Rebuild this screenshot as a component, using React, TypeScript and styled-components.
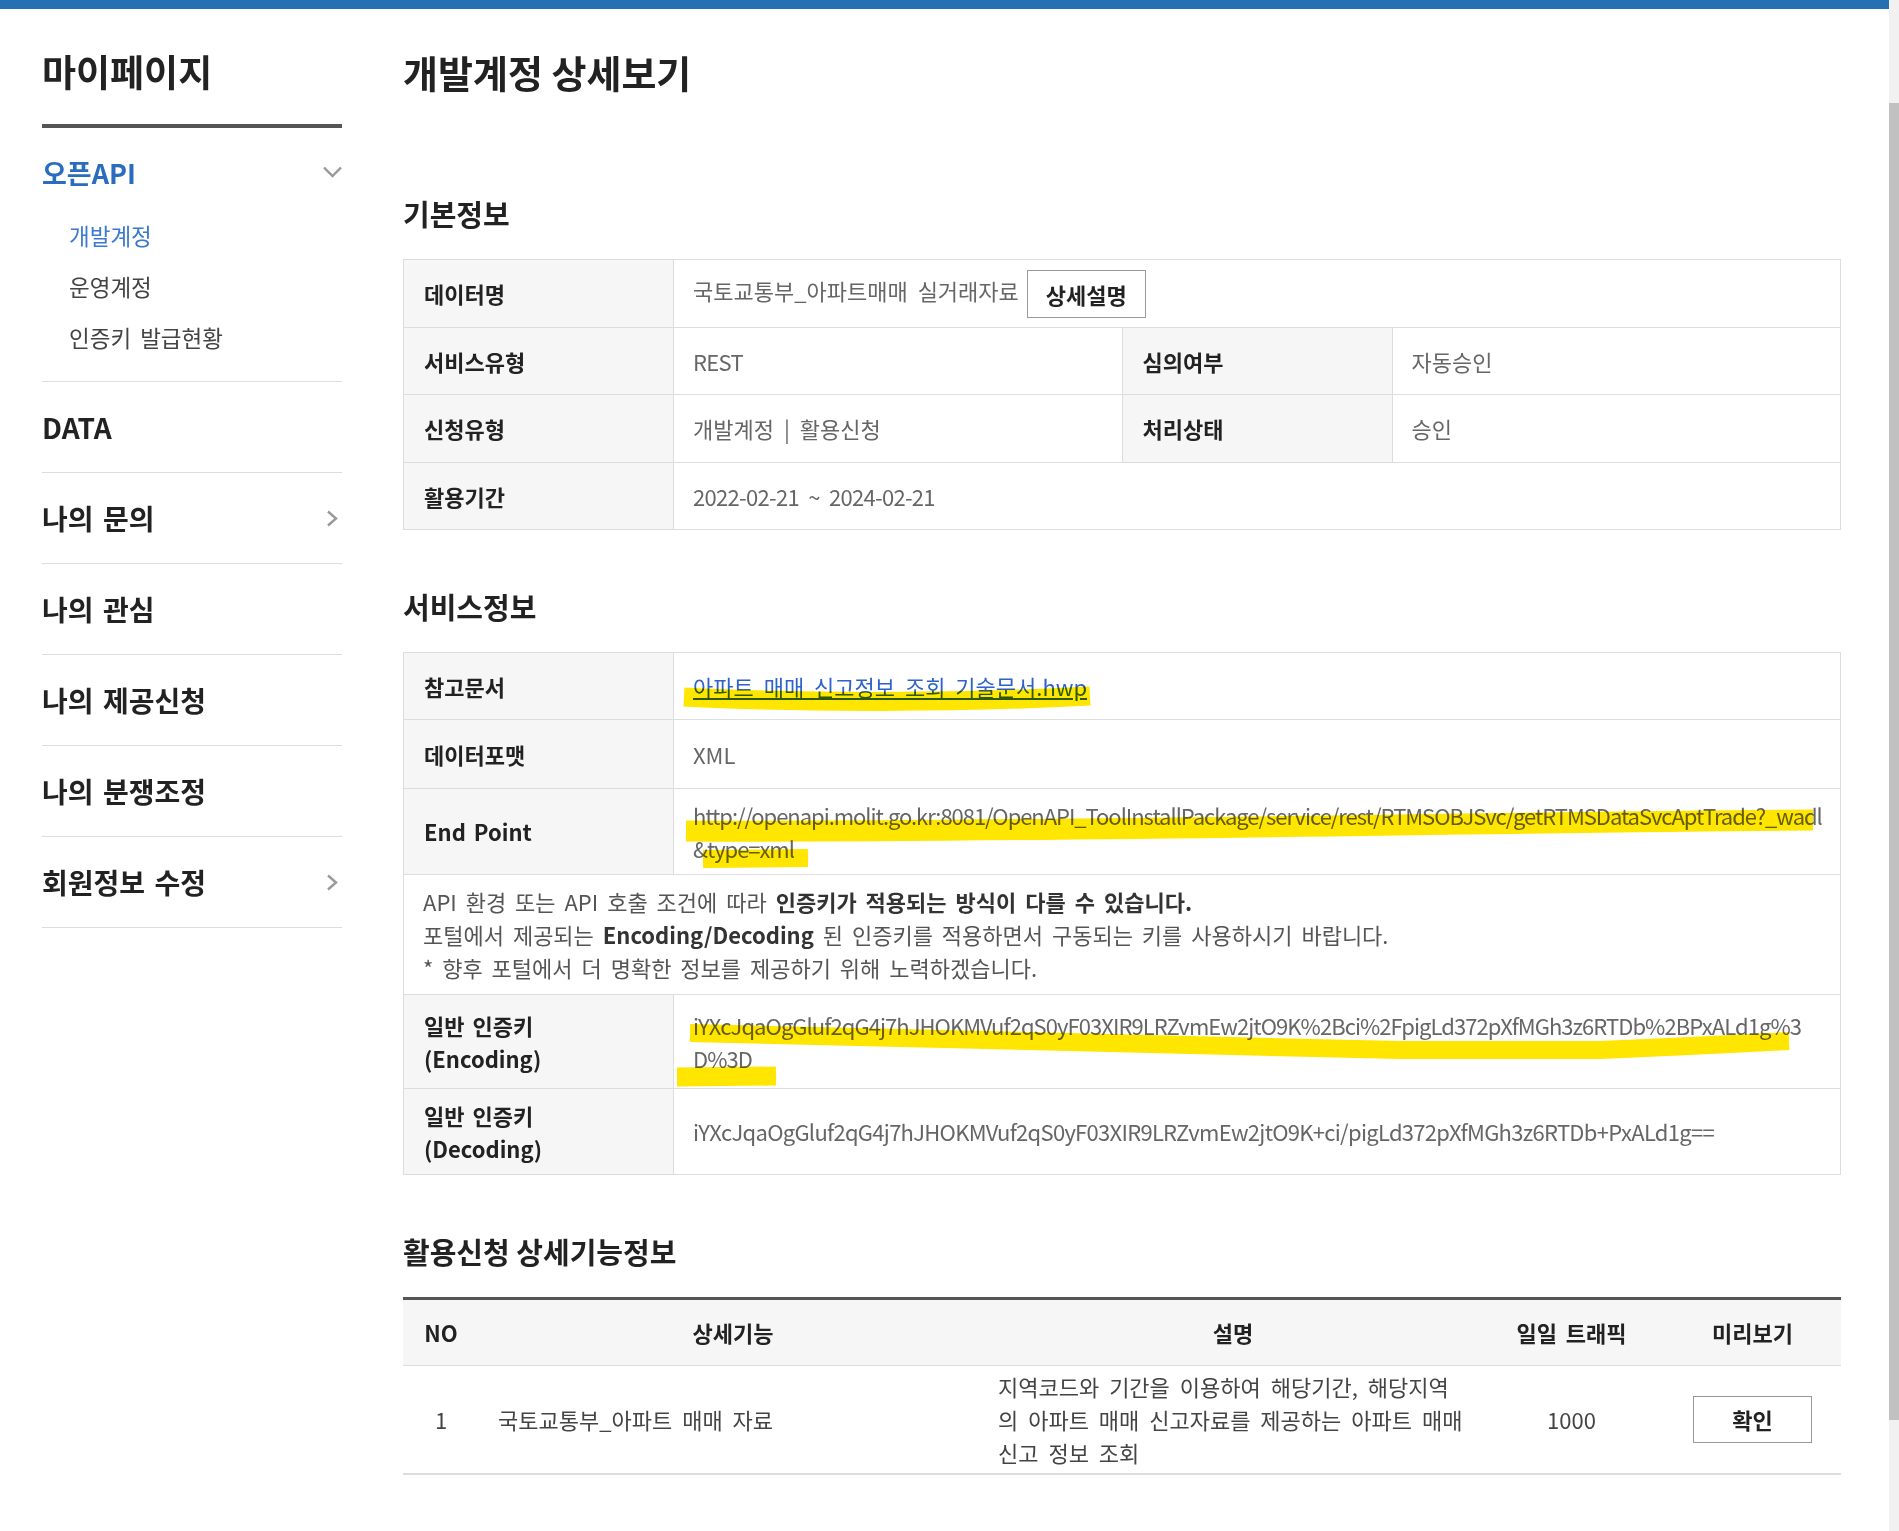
import React from 'react';
import styled, { createGlobalStyle } from 'styled-components';

const FONT = '"Noto Sans CJK KR", "Noto Sans", sans-serif';

const GlobalStyle = createGlobalStyle`
    html, body {
        margin: 0;
        padding: 0;
        background: #fff;
    }
    body {
        font-family: ${FONT};
        color: #222;
    }
    * {
        box-sizing: border-box;
    }
`;

const Viewport = styled.div`
    display: flex;
    height: 1531px;
    overflow: hidden;
`;

const Page = styled.div`
    position: relative;
    flex: 1;
    min-width: 0;
`;

const TopBar = styled.div`
    height: 9px;
    background: #2470b3;
`;

const Layout = styled.div`
    display: flex;
    gap: 61px;
    padding: 0 48px 0 42px;
`;

/* sidebar */

const Sidebar = styled.aside`
    flex: 0 0 300px;
    display: flex;
    flex-direction: column;
`;

const SideTitle = styled.h2`
    margin: 39px 0 0;
    padding-bottom: 30px;
    border-bottom: 4px solid #555;
    font-size: 37px;
    line-height: 46px;
    font-weight: 700;
    color: #222;
`;

const MenuGroup = styled.div`
    padding: 24px 0 18px;
    border-bottom: 1px solid #ddd;
`;

const GroupHead = styled.div`
    display: flex;
    justify-content: space-between;
    align-items: center;
    height: 40px;
    font-size: 27px;
    font-weight: 700;
    color: #2a6cbd;
`;

const SubList = styled.ul`
    list-style: none;
    margin: 18px 0 0;
    padding: 0 0 0 27px;
`;

const SubItem = styled.li<{ $active?: boolean }>`
    font-size: 22.5px;
    line-height: 51px;
    word-spacing: 4px;
    color: ${({ $active }) => ($active ? '#3b7ad0' : '#444')};
`;

const MenuItem = styled.div`
    display: flex;
    justify-content: space-between;
    align-items: center;
    height: 91px;
    border-bottom: 1px solid #ddd;
    font-size: 28px;
    font-weight: 700;
    color: #222;
    word-spacing: 3px;
`;

const Chevron = styled.svg`
    flex: none;
    fill: none;
    stroke: #999;
    stroke-width: 2.4;
`;

/* main */

const Main = styled.main`
    flex: 1;
    min-width: 0;
    display: flex;
    flex-direction: column;
`;

const PageTitle = styled.h1`
    margin: 39px 0 41px;
    font-size: 38px;
    line-height: 48px;
    font-weight: 700;
    color: #222;
`;

const Section = styled.section`
    margin-top: 57px;
`;

const SectionTitle = styled.h3`
    margin: 0 0 27px;
    font-size: 29px;
    line-height: 38px;
    font-weight: 700;
    color: #222;
`;

const InfoTable = styled.table`
    width: 100%;
    border-collapse: collapse;
    table-layout: fixed;
    font-size: 22px;
    line-height: 33px;
`;

const Row = styled.tr<{ $h: number }>`
    height: ${({ $h }) => $h}px;
`;

const Label = styled.th`
    background: #f6f6f6;
    border: 1px solid #ddd;
    padding: 0 20px;
    text-align: left;
    font-weight: 700;
    color: #222;
    word-spacing: 3px;
`;

const Value = styled.td`
    border: 1px solid #ddd;
    padding: 0 19px;
    color: #666;
    word-spacing: 5px;
`;

const Line = styled.span<{ $ls?: number }>`
    display: block;
    white-space: nowrap;
    letter-spacing: ${({ $ls }) => ($ls ? `${$ls}px` : 'normal')};
`;

const Latin = styled.span`
    letter-spacing: -0.7px;
`;

const DocLink = styled.a`
    color: #2e63c9;
    text-decoration: underline;
`;

const Strong = styled.b`
    color: #333;
    font-weight: 700;
`;

const Notice = styled.td`
    border: 1px solid #ddd;
    padding: 0 19px;
    color: #555;
    word-spacing: 4px;
`;

const OutlineButton = styled.button<{ $h: number }>`
    width: 119px;
    height: ${({ $h }) => $h}px;
    padding: 0;
    border: 1px solid #999;
    background: #fff;
    font-family: ${FONT};
    font-size: 22px;
    font-weight: 700;
    color: #222;
    vertical-align: middle;
`;

const DetailButton = styled(OutlineButton)`
    margin-left: 8px;
`;

const ListTable = styled.table`
    width: 100%;
    border-collapse: collapse;
    table-layout: fixed;
    border-top: 3px solid #555;
    border-bottom: 2px solid #ddd;
    font-size: 22px;
    line-height: 33px;
`;

const HeadCell = styled.th`
    height: 67px;
    background: #f6f6f6;
    border-bottom: 1px solid #ddd;
    text-align: center;
    font-weight: 700;
    color: #222;
    word-spacing: 4px;
`;

const BodyCell = styled.td<{ $align?: 'left' | 'center'; $pad?: number }>`
    height: 108px;
    padding: 0 ${({ $pad }) => $pad ?? 0}px;
    text-align: ${({ $align }) => $align ?? 'center'};
    color: #444;
    word-spacing: 5px;
`;

/* marker strokes drawn on top of the screenshot */

const Marker = styled.svg`
    position: absolute;
    top: 0;
    left: 0;
    pointer-events: none;
    mix-blend-mode: multiply;
`;

/* fake browser scrollbar */

const ScrollTrack = styled.div`
    flex: 0 0 10px;
    padding-top: 103px;
    background: #f1f1f1;
`;

const ScrollThumb = styled.div`
    height: 1317px;
    background: #c1c1c1;
`;

const ChevronDown = () => (
    <Chevron width="19" height="12" viewBox="0 0 19 12">
        <polyline points="1,1.5 9.5,10 18,1.5" />
    </Chevron>
);

const ChevronRight = () => (
    <Chevron width="13" height="17" viewBox="0 0 13 17" style={{ marginRight: 3 }}>
        <polyline points="2,1.5 10,8.5 2,15.5" />
    </Chevron>
);

const menuItems = [
    { label: 'DATA', arrow: false },
    { label: '나의 문의', arrow: true },
    { label: '나의 관심', arrow: false },
    { label: '나의 제공신청', arrow: false },
    { label: '나의 분쟁조정', arrow: false },
    { label: '회원정보 수정', arrow: true },
];

const markerStrokes = [
    { d: 'M684 697 C 800 703, 960 703, 1090 696', w: 19 },
    { d: 'M686 831 C 1000 833, 1500 822, 1813 820', w: 21 },
    { d: 'M703 859 L 808 858', w: 18 },
    { d: 'M690 1033 C 900 1040, 1200 1043, 1400 1050 L 1600 1050 C 1700 1046, 1750 1043, 1789 1041', w: 18 },
    { d: 'M677 1077 L 776 1076', w: 19 },
];

export default function App() {
    return (
        <>
            <GlobalStyle />
            <Viewport>
                <Page>
                    <TopBar />
                    <Layout>
                        <Sidebar>
                            <SideTitle>마이페이지</SideTitle>
                            <MenuGroup>
                                <GroupHead>
                                    오픈API
                                    <ChevronDown />
                                </GroupHead>
                                <SubList>
                                    <SubItem $active>개발계정</SubItem>
                                    <SubItem>운영계정</SubItem>
                                    <SubItem>인증키 발급현황</SubItem>
                                </SubList>
                            </MenuGroup>
                            {menuItems.map((item) => (
                                <MenuItem key={item.label}>
                                    {item.label}
                                    {item.arrow && <ChevronRight />}
                                </MenuItem>
                            ))}
                        </Sidebar>

                        <Main>
                            <PageTitle>개발계정 상세보기</PageTitle>

                            <Section>
                                <SectionTitle>기본정보</SectionTitle>
                                <InfoTable>
                                    <colgroup>
                                        <col style={{ width: 270 }} />
                                        <col />
                                        <col style={{ width: 270 }} />
                                        <col />
                                    </colgroup>
                                    <tbody>
                                        <Row $h={68}>
                                            <Label>데이터명</Label>
                                            <Value colSpan={3}>
                                                국토교통부_아파트매매 실거래자료
                                                <DetailButton $h={48}>상세설명</DetailButton>
                                            </Value>
                                        </Row>
                                        <Row $h={67}>
                                            <Label>서비스유형</Label>
                                            <Value>
                                                <Latin>REST</Latin>
                                            </Value>
                                            <Label>심의여부</Label>
                                            <Value>자동승인</Value>
                                        </Row>
                                        <Row $h={68}>
                                            <Label>신청유형</Label>
                                            <Value>개발계정 | 활용신청</Value>
                                            <Label>처리상태</Label>
                                            <Value>승인</Value>
                                        </Row>
                                        <Row $h={67}>
                                            <Label>활용기간</Label>
                                            <Value colSpan={3}>
                                                <Latin>2022-02-21 ~ 2024-02-21</Latin>
                                            </Value>
                                        </Row>
                                    </tbody>
                                </InfoTable>
                            </Section>

                            <Section>
                                <SectionTitle>서비스정보</SectionTitle>
                                <InfoTable>
                                    <colgroup>
                                        <col style={{ width: 270 }} />
                                        <col />
                                    </colgroup>
                                    <tbody>
                                        <Row $h={67}>
                                            <Label>참고문서</Label>
                                            <Value>
                                                <DocLink href="#">아파트 매매 신고정보 조회 기술문서.hwp</DocLink>
                                            </Value>
                                        </Row>
                                        <Row $h={69}>
                                            <Label>데이터포맷</Label>
                                            <Value>XML</Value>
                                        </Row>
                                        <Row $h={86}>
                                            <Label>End Point</Label>
                                            <Value>
                                                <Line $ls={-1.05}>
                                                    http://openapi.molit.go.kr:8081/OpenAPI_ToolInstallPackage/service/rest/RTMSOBJSvc/getRTMSDataSvcAptTrade?_wadl
                                                </Line>
                                                <Line $ls={-1.05}>&amp;type=xml</Line>
                                            </Value>
                                        </Row>
                                        <Row $h={120}>
                                            <Notice colSpan={2}>
                                                <Line>
                                                    API 환경 또는 API 호출 조건에 따라{' '}
                                                    <Strong>인증키가 적용되는 방식이 다를 수 있습니다.</Strong>
                                                </Line>
                                                <Line>
                                                    포털에서 제공되는 <Strong>Encoding/Decoding</Strong> 된 인증키를
                                                    적용하면서 구동되는 키를 사용하시기 바랍니다.
                                                </Line>
                                                <Line>* 향후 포털에서 더 명확한 정보를 제공하기 위해 노력하겠습니다.</Line>
                                            </Notice>
                                        </Row>
                                        <Row $h={94}>
                                            <Label>
                                                <Line>일반 인증키</Line>
                                                <Line>(Encoding)</Line>
                                            </Label>
                                            <Value>
                                                <Line $ls={-0.95}>
                                                    iYXcJqaOgGluf2qG4j7hJHOKMVuf2qS0yF03XIR9LRZvmEw2jtO9K%2Bci%2FpigLd372pXfMGh3z6RTDb%2BPxALd1g%3
                                                </Line>
                                                <Line $ls={-0.95}>D%3D</Line>
                                            </Value>
                                        </Row>
                                        <Row $h={86}>
                                            <Label>
                                                <Line>일반 인증키</Line>
                                                <Line>(Decoding)</Line>
                                            </Label>
                                            <Value>
                                                <Line $ls={-0.72}>
                                                    iYXcJqaOgGluf2qG4j7hJHOKMVuf2qS0yF03XIR9LRZvmEw2jtO9K+ci/pigLd372pXfMGh3z6RTDb+PxALd1g==
                                                </Line>
                                            </Value>
                                        </Row>
                                    </tbody>
                                </InfoTable>
                            </Section>

                            <Section>
                                <SectionTitle>활용신청 상세기능정보</SectionTitle>
                                <ListTable>
                                    <colgroup>
                                        <col style={{ width: 76 }} />
                                        <col style={{ width: 508 }} />
                                        <col style={{ width: 492 }} />
                                        <col style={{ width: 185 }} />
                                        <col />
                                    </colgroup>
                                    <thead>
                                        <tr>
                                            <HeadCell>NO</HeadCell>
                                            <HeadCell>상세기능</HeadCell>
                                            <HeadCell>설명</HeadCell>
                                            <HeadCell>일일 트래픽</HeadCell>
                                            <HeadCell>미리보기</HeadCell>
                                        </tr>
                                    </thead>
                                    <tbody>
                                        <tr>
                                            <BodyCell>1</BodyCell>
                                            <BodyCell $align="left" $pad={19}>
                                                국토교통부_아파트 매매 자료
                                            </BodyCell>
                                            <BodyCell $align="left" $pad={11}>
                                                <Line>지역코드와 기간을 이용하여 해당기간, 해당지역</Line>
                                                <Line>의 아파트 매매 신고자료를 제공하는 아파트 매매</Line>
                                                <Line>신고 정보 조회</Line>
                                            </BodyCell>
                                            <BodyCell>1000</BodyCell>
                                            <BodyCell>
                                                <OutlineButton $h={47}>확인</OutlineButton>
                                            </BodyCell>
                                        </tr>
                                    </tbody>
                                </ListTable>
                            </Section>
                        </Main>
                    </Layout>

                    <Marker width="1889" height="1531" viewBox="0 0 1889 1531">
                        {markerStrokes.map((s) => (
                            <path key={s.d} d={s.d} fill="none" stroke="#ffe600" strokeWidth={s.w} />
                        ))}
                    </Marker>
                </Page>
                <ScrollTrack>
                    <ScrollThumb />
                </ScrollTrack>
            </Viewport>
        </>
    );
}
